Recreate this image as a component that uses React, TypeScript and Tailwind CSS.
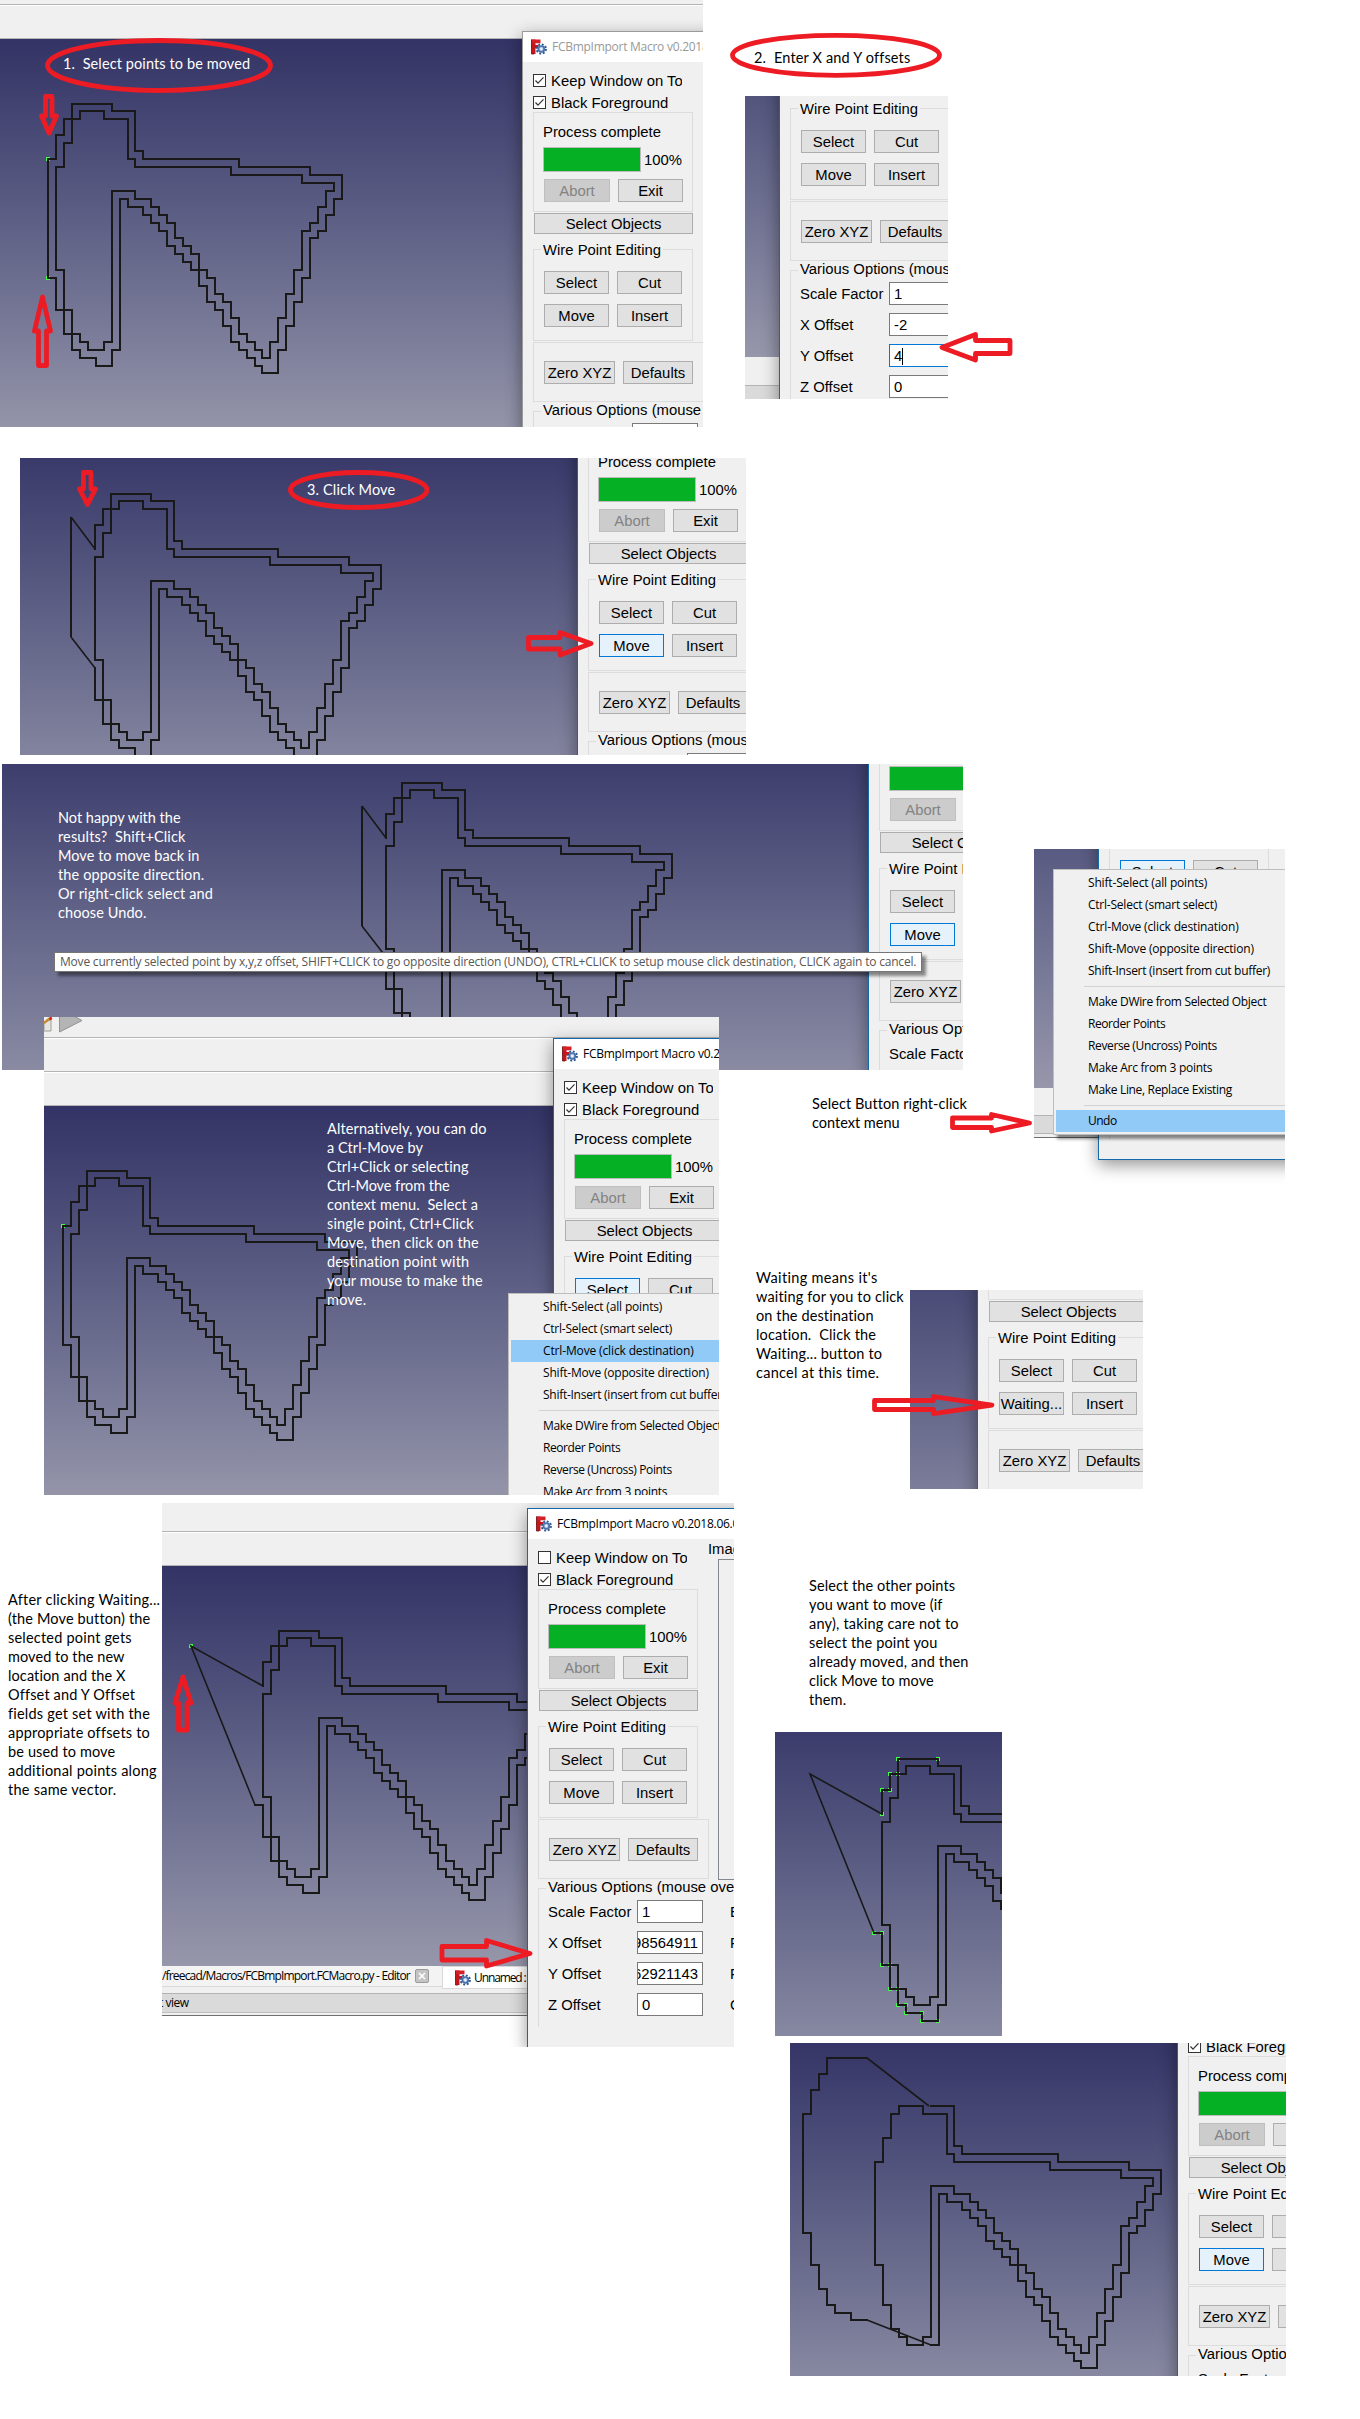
import { useLayoutEffect, useRef, useState } from "react";
import type { ReactNode } from "react";

/* ---------- text fitted to a given width by letter spacing ---------- */
function Fit({ w, children, className = "" }: { w: number; children: string; className?: string }) {
  const ref = useRef<HTMLSpanElement>(null);
  const [ls, setLs] = useState(0);
  useLayoutEffect(() => {
    if (ref.current) setLs((w - ref.current.offsetWidth) / children.length);
  }, []);
  return (
    <span ref={ref} className={"inline-block shrink-0 whitespace-pre " + className} style={{ letterSpacing: ls + "px" }}>
      {children}
    </span>
  );
}

type Line = [string, number];

function Note({ x, y, lines, light }: { x: number; y: number; lines: Line[]; light?: boolean }) {
  return (
    <div
      className={
        "absolute flex flex-col items-start font-['Lato',sans-serif] text-[14.5px] leading-[19px] " +
        (light ? "text-white" : "text-black")
      }
      style={{ left: x, top: y }}
    >
      {lines.map(([t, w]) => (
        <Fit key={t} w={w}>
          {t}
        </Fit>
      ))}
    </div>
  );
}

/* ---------- wires ---------- */
const INNER =
  "M56,167H64V143H72V119H80V111H104V119H128V159H135V167H231V175H302V183H334V191H326V207H318V223H310V231H302V270H294V294H286V318H278V342H270V358H262V350H255V342H247V334H239V318H231V302H223V294H215V278H207V270H199V254H191V246H183V238H175V223H167V215H159V207H151V199H135V191H112V342H104V350H88V342H80V334H72V310H64V270H56Z";
const RIGHT =
  "M111,111H135V151H143V159H239V167H310V175H342V199H334V215H326V231H318V238H310V278H302V302H294V326H286V350H278V373H262V366H255V358H247V350H239V342H231V326H223V310H215V302H207V286H199V270H191V262H183V254H175V246H167V231H159V223H151V215H143V207H128V199H120V350H111";
const LEFT = "M56,160V135H64V119H72V104H112V111M112,350V366H96V358H80V350H72V334H64V310H56V277";

const VARIANTS = {
  original: { thick: LEFT + "M57,159H48V278H57", thin: "" },
  shifted: { thick: LEFT + "M32,127V247", thin: "M32,127L56,159M32,247L56,278" },
  pulled: { thick: LEFT + "M57,278H47", thin: "M56,159L-16,119L48,278" },
  moved: {
    thick: "M49,63H8V79H0V95H-8V119H-16V238H-8V270H0V294H8V310H16V318H32V325H49",
    thin: "M48,63L110,111M48,325L112,350",
  },
};

function View({
  y,
  w,
  dx,
  variant,
  dots = [],
}: {
  y: number;
  w: number;
  dx: number;
  variant?: keyof typeof VARIANTS;
  dots?: [number, number][];
}) {
  const v = variant ? VARIANTS[variant] : null;
  return (
    <div
      className="absolute left-0 h-[400px] bg-linear-to-b from-[#333365] to-[#9797ab]"
      style={{ top: y, width: w }}
    >
      {v && (
        <svg className="absolute left-0 top-0 overflow-visible" width={w} height={400} fill="none" stroke="#191919">
          <g transform={`translate(${dx} -39)`}>
            {dots.map(([a, b], i) => (
              <rect key={i} x={a - 2} y={b - 2} width={4} height={4} fill="#3cff46" stroke="none" />
            ))}
            <path d={INNER + RIGHT + v.thick} strokeWidth={2} shapeRendering="crispEdges" />
            <path d={v.thin} strokeWidth={1.6} />
          </g>
        </svg>
      )}
    </div>
  );
}

/* ---------- shared widgets ---------- */
function AppIcon() {
  return (
    <svg width="16" height="16" viewBox="0 0 16 16" className="block shrink-0">
      <rect x="0.5" y="0.5" width="4" height="14.5" fill="#c4161c" />
      <rect x="0.5" y="0.5" width="9" height="3.8" fill="#d42027" />
      <rect x="0.5" y="6" width="7" height="3.2" fill="#c4161c" />
      <path d="M0.5 0.5V15H3" stroke="#6d0c10" fill="none" strokeWidth="0.8" />
      <circle cx="10.3" cy="10" r="4.6" fill="none" stroke="#33588f" strokeWidth="2" strokeDasharray="1.9 1.7" />
      <circle cx="10.3" cy="10" r="3" fill="#a9c0e0" stroke="#4671ad" strokeWidth="1.7" />
      <circle cx="10.3" cy="10" r="1.2" fill="#eef3fa" />
    </svg>
  );
}

function Button({
  children,
  className = "w-[65px]",
  state = "normal",
}: {
  children: string;
  className?: string;
  state?: "normal" | "hot" | "off";
}) {
  const look = {
    normal: "border-[#adadad] bg-[#e1e1e1] text-black",
    hot: "border-[#0078d7] bg-[#e5f1fb] text-black",
    off: "border-[#bfbfbf] bg-[#cccccc] text-[#838383]",
  }[state];
  return (
    <div className={"flex h-[23px] shrink-0 items-center justify-center border pt-px whitespace-nowrap " + look + " " + className}>
      {children}
    </div>
  );
}

function Check({ on, children }: { on: boolean; children: string }) {
  return (
    <div className="flex h-[13px] items-center gap-[5px]">
      <div className="h-[13px] w-[13px] shrink-0 border border-[#333] bg-white">
        {on && (
          <svg width="11" height="11" viewBox="0 0 11 11" className="block" fill="none" stroke="#333" strokeWidth="1.2">
            <path d="M1.5 5.5L4 8.2L9.5 2.3" />
          </svg>
        )}
      </div>
      <div className="h-[20px] w-[131px] overflow-hidden leading-[21px] whitespace-nowrap">{children}</div>
    </div>
  );
}

function Legend({ children, className }: { children: string; className: string }) {
  return (
    <div className={"flex h-[14px] " + className}>
      <div className="bg-[#f0f0f0] px-[2px] leading-[15px] whitespace-nowrap">{children}</div>
    </div>
  );
}

function Field({ label, value, hot, end, extra }: { label: string; value: string; hot?: boolean; end?: boolean; extra?: string }) {
  return (
    <div className="flex h-[23px] items-center">
      <div className="w-[89px] shrink-0 pt-px whitespace-nowrap">{label}</div>
      <div
        className={
          "flex h-[23px] w-[66px] shrink-0 items-center overflow-hidden border bg-white pt-px " +
          (hot ? "border-[#0078d7] " : "border-[#7a7a7a] ") +
          (end ? "justify-end pr-[4px]" : "pl-[4px]")
        }
      >
        {value}
        {hot && <span className="h-[17px] w-px bg-black" />}
      </div>
      {extra && <div className="ml-[27px] pt-px">{extra}</div>}
    </div>
  );
}

interface WinProps {
  x: number;
  y: number;
  active?: boolean;
  keep?: boolean;
  hot?: "Select" | "Move";
  move?: string;
  values?: string[];
  yHot?: boolean;
  full?: boolean;
}

function MacroWindow({ x, y, active = true, keep = true, hot, move = "Move", values = ["1", "0", "0", "0"], yHot, full }: WinProps) {
  return (
    <div
      className={
        "absolute h-[540px] w-[400px] border bg-[#f0f0f0] font-['Liberation_Sans',sans-serif] text-[14.85px] leading-none text-black shadow-[0_5px_16px_rgba(0,0,0,0.42)] " +
        (active ? "border-[#1569a8]" : "border-[#9a9a9a]")
      }
      style={{ left: x, top: y }}
    >
      <div
        className={
          "flex h-[30px] items-center gap-[5px] bg-white pl-[8px] font-['Open_Sans',sans-serif] text-[12px] " +
          (active ? "text-black" : "text-[#999]")
        }
      >
        <AppIcon />
        <Fit w={182}>FCBmpImport Macro v0.2018.06.0</Fit>
      </div>
      <div className="flex flex-col pl-[10px]">
        <div className="mt-[12px] flex flex-col gap-[9px]">
          <Check on={keep}>Keep Window on Top</Check>
          <Check on>Black Foreground</Check>
        </div>
        <div className="mt-[3px] h-[100px] w-[160px] border border-[#dcdcdc] pl-[9px]">
          <div className="mt-[12px] h-[14px] leading-[15px]">Process complete</div>
          <div className="mt-[8px] flex h-[25px] items-center gap-[3px]">
            <div className="h-[25px] w-[98px] border border-[#bcbcbc] bg-[#06b025]" />
            <span className="pt-px">100%</span>
          </div>
          <div className="mt-[7px] ml-px flex gap-[8px]">
            <Button className="w-[66px]" state="off">Abort</Button>
            <Button>Exit</Button>
          </div>
        </div>
        <div className="mt-px ml-px flex h-[21px] w-[159px] items-center justify-center border border-[#adadad] bg-[#e1e1e1] pt-px">
          Select Objects
        </div>
        <div className="mt-[15px] h-[92px] w-[160px] border border-[#dcdcdc]">
          <Legend className="-mt-[7px] ml-[7px]">Wire Point Editing</Legend>
          <div className="mt-[14px] flex gap-[8px] pl-[10px]">
            <Button state={hot === "Select" ? "hot" : "normal"}>Select</Button>
            <Button>Cut</Button>
          </div>
          <div className="mt-[10px] flex gap-[8px] pl-[10px]">
            <Button state={hot === "Move" ? "hot" : "normal"}>{move}</Button>
            <Button>Insert</Button>
          </div>
        </div>
        <div className="mt-px h-[60px] w-[171px] border border-[#dcdcdc]">
          <div className="mt-[18px] flex gap-[8px] pl-[10px]">
            <Button className="w-[71px]">Zero XYZ</Button>
            <Button className="w-[70px]">Defaults</Button>
          </div>
        </div>
        <div className="mt-[9px] h-[139px] w-[380px] border-t border-l border-[#dcdcdc]">
          <Legend className="-mt-[9px] ml-[7px]">Various Options (mouse over for tips)</Legend>
          <div className="mt-[6px] flex flex-col gap-[8px] pl-[9px]">
            <Field label="Scale Factor" value={values[0]} extra={full ? "Edges" : undefined} />
            <Field label="X Offset" value={values[1]} end={full} extra={full ? "Faces" : undefined} />
            <Field label="Y Offset" value={values[2]} end={full} hot={yHot} extra={full ? "Fuse" : undefined} />
            <Field label="Z Offset" value={values[3]} extra={full ? "Cut" : undefined} />
          </div>
        </div>
      </div>
      {full && (
        <div className="absolute top-[31px] left-[180px] flex flex-col">
          <div className="h-[18px] leading-[18px]">Image</div>
          <div className="mt-px ml-[10px] h-[321px] w-[200px] border border-[#828790]" />
        </div>
      )}
    </div>
  );
}

const MENU: (Line | null)[] = [
  ["Shift-Select (all points)", 119],
  ["Ctrl-Select (smart select)", 129],
  ["Ctrl-Move (click destination)", 151],
  ["Shift-Move (opposite direction)", 166],
  ["Shift-Insert (insert from cut buffer)", 182],
  null,
  ["Make DWire from Selected Object", 178],
  ["Reorder Points", 77],
  ["Reverse (Uncross) Points", 129],
  ["Make Arc from 3 points", 124],
  ["Make Line, Replace Existing", 144],
  null,
  ["Undo", 29],
];

function ContextMenu({ x, y, active }: { x: number; y: number; active: string }) {
  return (
    <div
      className="absolute w-[300px] border border-[#bdbdbd] bg-[#f0f0f0] p-[2px] font-['Open_Sans',sans-serif] text-[12px] text-black shadow-[4px_4px_3px_rgba(0,0,0,0.45)]"
      style={{ left: x, top: y }}
    >
      {MENU.map((m, i) =>
        m ? (
          <div key={i} className={"flex h-[22px] items-center pl-[32px] " + (m[0] === active ? "bg-[#91c9f7]" : "")}>
            <Fit w={m[1]}>{m[0]}</Fit>
          </div>
        ) : (
          <div key={i} className="flex h-[9px] items-center pl-[28px]">
            <div className="h-px w-full bg-[#d2d2d2]" />
          </div>
        ),
      )}
    </div>
  );
}

/* A cropped capture placed on the tutorial canvas. */
function Snip({ x, y, w, h, children }: { x: number; y: number; w: number; h: number; children: ReactNode }) {
  return (
    <div className="absolute overflow-hidden" style={{ left: x, top: y, width: w, height: h }}>
      {children}
    </div>
  );
}

function Toolbars({ rows }: { rows: number[] }) {
  return (
    <div className="flex flex-col bg-[#f0f0f0]">
      {rows.map((h, i) => (
        <div
          key={i}
          className={"border-b border-b-[#b4b4b4] " + (i > 0 ? "border-t border-t-white" : "")}
          style={{ height: h }}
        />
      ))}
    </div>
  );
}

const ARROWS = [
  "45.5,96.5 52,96.5 52,116 56.5,116 49,133 41.5,116 45.5,116",
  "38.5,365.5 46.5,365.5 46.5,331 50.5,331 42.5,297 34.5,331 38.5,331",
  "1010,340.5 975.5,340.5 975.5,334.5 942,347.5 975.5,360 975.5,353.5 1010,353.5",
  "83.5,472.5 91,472.5 91,489 95.5,489 87.5,504.5 79.5,489 83.5,489",
  "528.5,637.5 560,637.5 560,632.5 591,643.5 560,655 560,649 528.5,649",
  "952.5,1118 991.5,1118 991.5,1114.5 1029.5,1123 991.5,1131 991.5,1127.5 952.5,1127.5",
  "874.5,1400.5 933.5,1400.5 933.5,1396.5 992,1405 933.5,1413.5 933.5,1409.5 874.5,1409.5",
  "178.5,1730 187,1730 187,1703 191,1703 183,1677 175,1703 178.5,1703",
  "442,1946.5 486.5,1946.5 486.5,1940.5 530,1953.5 486.5,1966 486.5,1960 442,1960",
];

export default function App() {
  return (
    <main className="relative h-[2419px] w-[1360px] overflow-hidden bg-white">
      <Snip x={0} y={0} w={703} h={427}>
        <Toolbars rows={[5, 34]} />
        <View y={39} w={703} dx={0} variant="original" dots={[[48, 159], [48, 278]]} />
        <MacroWindow x={522} y={31} active={false} />
      </Snip>

      <Snip x={745} y={96} w={203} h={303}>
        <View y={-139} w={203} dx={0} />
        <div className="mt-[261px] h-[29px] border-b border-[#b4b4b4] bg-[#f0f0f0]" />
        <div className="h-[13px] bg-[#dadada]" />
        <MacroWindow x={34} y={-206} values={["1", "-2", "4", "0"]} yHot />
      </Snip>

      <Snip x={20} y={458} w={726} h={297}>
        <View y={-29} w={726} dx={19} variant="shifted" />
        <MacroWindow x={557} y={-97} hot="Move" />
      </Snip>

      <Snip x={2} y={764} w={961} h={306}>
        <View y={-46} w={961} dx={328} variant="shifted" />
        <MacroWindow x={866} y={-114} hot="Move" />
        <div className="absolute top-[188px] left-[52px] flex h-[20px] w-[868px] items-center border border-[#767676] bg-white pl-[5px] font-['Open_Sans',sans-serif] text-[12px] text-[#575757] shadow-[4px_4px_3px_rgba(0,0,0,0.45)]">
          <Fit w={856}>
            Move currently selected point by x,y,z offset, SHIFT+CLICK to go opposite direction (UNDO), CTRL+CLICK to setup mouse click destination, CLICK again to cancel.
          </Fit>
        </div>
      </Snip>

      <Snip x={44} y={1017} w={675} h={478}>
        <Toolbars rows={[21, 34, 34]} />
        <svg className="absolute top-0 left-0" width="40" height="16" viewBox="0 0 40 16">
          <path d="M0 13V5L7 3V14H0" fill="#e6e4e0" stroke="#8d8a86" strokeWidth="0.8" />
          <path d="M0 6L5.5 1.5" stroke="#c98b2c" strokeWidth="2.4" />
          <circle cx="6.6" cy="1.4" r="1.5" fill="#d3201f" />
          <path d="M15.5 -9L38 3.5L15.5 15Z" fill="#b4b4b4" stroke="#929292" strokeWidth="1" />
        </svg>
        <View y={89} w={675} dx={-29} variant="original" dots={[[48, 159]]} />
        <MacroWindow x={509} y={21} hot="Select" />
        <ContextMenu x={464} y={276} active="Ctrl-Move (click destination)" />
      </Snip>

      <Snip x={1034} y={849} w={251} h={341}>
        <View y={-161} w={251} dx={0} />
        <div className="mt-[239px] h-[28px] border-b border-[#b4b4b4] bg-[#f0f0f0]" />
        <div className="h-[18px] border-b border-[#b4b4b4] bg-[#dadada]" />
        <div className="h-[4px] border-b border-[#6f6f6f] bg-[#f0f0f0]" />
        <MacroWindow x={64} y={-229} hot="Select" />
        <ContextMenu x={19} y={20} active="Undo" />
      </Snip>

      <Snip x={910} y={1290} w={233} h={199}>
        <View y={-100} w={233} dx={0} />
        <MacroWindow x={67} y={-171} move="Waiting..." />
      </Snip>

      <Snip x={162} y={1503} w={572} h={544}>
        <Toolbars rows={[29, 34]} />
        <View y={63} w={572} dx={45} variant="pulled" dots={[[-16, 119]]} />
        <div className="mt-[400px] flex h-[28px] w-[400px] border-b border-[#b4b4b4] bg-[#f0f0f0] font-['Open_Sans',sans-serif] text-[12px] text-black">
          <div className="flex h-[21px] w-[280px] shrink-0 items-center gap-[5px] border-b border-[#d9d9d9] bg-[#f3f3f3]">
            <Fit w={248}>/freecad/Macros/FCBmpImport.FCMacro.py - Editor</Fit>
            <div className="flex h-[14px] w-[14px] shrink-0 items-center justify-center rounded-[2px] border border-[#9a9a9a] bg-[#c4c4c4]">
              <svg width="8" height="8" viewBox="0 0 8 8" stroke="#fff" strokeWidth="1.6">
                <path d="M1 1L7 7M7 1L1 7" />
              </svg>
            </div>
          </div>
          <div className="flex h-[23px] w-[120px] shrink-0 items-center gap-[3px] border border-[#d9d9d9] bg-white pl-[12px]">
            <AppIcon />
            <Fit w={52}>Unnamed :</Fit>
          </div>
        </div>
        <div className="flex h-[19px] items-center border-b border-[#c0c0c0] bg-[#dadada] font-['Open_Sans',sans-serif] text-[12px] text-black">
          <Fit w={29} className="-ml-[3px]">t view</Fit>
        </div>
        <div className="h-[3px] border-b border-[#6f6f6f] bg-[#f0f0f0]" />
        <MacroWindow x={365} y={5} keep={false} full values={["1", "4.98564911", "7.62921143", "0"]} />
      </Snip>

      <Snip x={775} y={1732} w={227} h={304}>
        <View
          y={-38}
          w={227}
          dx={51}
          variant="pulled"
          dots={[
            [72, 104], [112, 104], [64, 119], [72, 119], [56, 135], [64, 135], [56, 159], [48, 278], [56, 278], [56, 310],
            [64, 310], [64, 334], [72, 334], [72, 350], [80, 350], [80, 358], [96, 358], [96, 366], [112, 366],
          ]}
        />
      </Snip>

      <Snip x={790} y={2043} w={496} h={333}>
        <View y={-9} w={496} dx={29} variant="moved" />
        <MacroWindow x={387} y={-68} hot="Move" />
      </Snip>

      <Note x={63} y={54} light lines={[["1.  Select points to be moved", 187]]} />
      <Note x={754} y={48} lines={[["2.  Enter X and Y offsets", 156]]} />
      <Note x={307} y={480} light lines={[["3. Click Move", 88]]} />
      <Note
        x={58}
        y={808}
        light
        lines={[
          ["Not happy with the", 123], ["results?  Shift+Click", 127], ["Move to move back in", 142],
          ["the opposite direction.", 146], ["Or right-click select and", 155], ["choose Undo.", 88],
        ]}
      />
      <Note
        x={327}
        y={1119}
        light
        lines={[
          ["Alternatively, you can do", 160], ["a Ctrl-Move by", 96], ["Ctrl+Click or selecting", 142], ["Ctrl-Move from the", 123],
          ["context menu.  Select a", 151], ["single point, Ctrl+Click", 147], ["Move, then click on the", 152],
          ["destination point with", 143], ["your mouse to make the", 156], ["move.", 39],
        ]}
      />
      <Note x={812} y={1094} lines={[["Select Button right-click", 155], ["context menu", 88]]} />
      <Note
        x={756}
        y={1268}
        lines={[
          ["Waiting means it's", 122], ["waiting for you to click", 148], ["on the destination", 118], ["location.  Click the", 120],
          ["Waiting... button to", 126], ["cancel at this time.", 124],
        ]}
      />
      <Note
        x={8}
        y={1590}
        lines={[
          ["After clicking Waiting...", 152], ["(the Move button) the", 142], ["selected point gets", 124], ["moved to the new", 117],
          ["location and the X", 118], ["Offset and Y Offset", 126], ["fields get set with the", 142], ["appropriate offsets to", 141],
          ["be used to move", 107], ["additional points along", 149], ["the same vector.", 108],
        ]}
      />
      <Note
        x={809}
        y={1576}
        lines={[
          ["Select the other points", 146], ["you want to move (if", 134], ["any), taking care not to", 150], ["select the point you", 128],
          ["already moved, and then", 160], ["click Move to move", 125], ["them.", 37],
        ]}
      />

      <svg
        className="pointer-events-none absolute top-0 left-0"
        width="1360"
        height="2419"
        fill="none"
        stroke="#ed1c24"
        strokeWidth="4.8"
        strokeLinejoin="round"
      >
        <ellipse cx="159" cy="65.5" rx="111.5" ry="25" />
        <ellipse cx="836" cy="55.3" rx="103.5" ry="20" />
        <ellipse cx="358.7" cy="490" rx="68.3" ry="17.5" />
        {ARROWS.map((p) => (
          <polygon key={p} points={p} />
        ))}
      </svg>
    </main>
  );
}
